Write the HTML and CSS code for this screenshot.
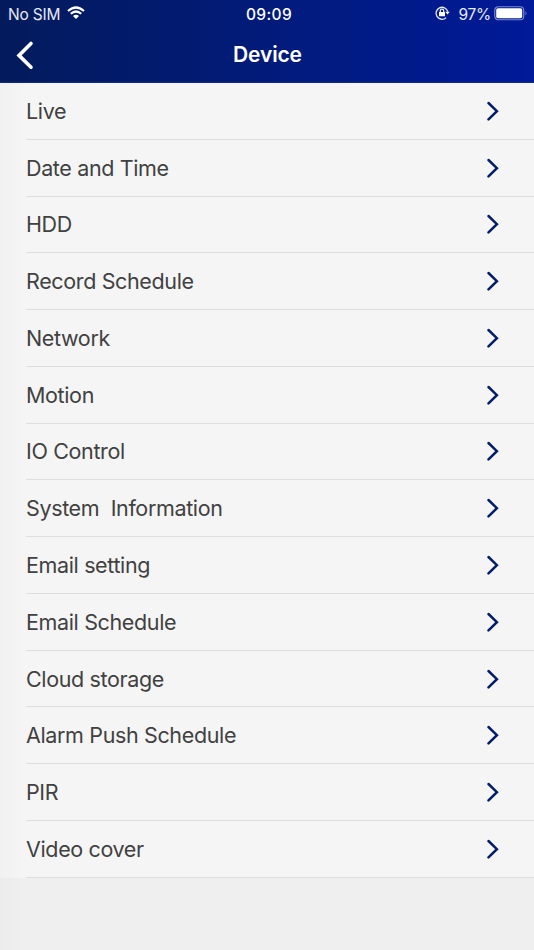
FILE: index.html
```html
<!DOCTYPE html>
<html lang="en">
<head>
<meta charset="utf-8">
<meta name="viewport" content="width=device-width">
<title>Device</title>
<link rel="stylesheet" href="styles.css">
</head>
<body>
<svg class="sprite" aria-hidden="true"><symbol id="chevron" viewBox="0 0 12 20"><path d="M1.5 2 L9.9 10.2 L1.5 18.4"/></symbol></svg>
<header class="header">
  <div class="status">
    <div class="carrier"><span>No SIM</span>
      <svg class="wifi" viewBox="0 0 18 14"><path d="M1 5 Q9 -2 17 5M3.8 7.8 Q9 3.2 14.2 7.8"/><path class="solid" d="M6 10 Q9 7.4 12 10 L9 13Z"/></svg>
    </div>
    <time class="time">09:09</time>
    <div class="power">
      <svg class="lock" viewBox="0 0 16 14"><path d="M11.2 11.6A6 6 0 1 1 12.8 5.6"/><path d="M5.3 6V4.8a1.7 1.7 0 0 1 3.4 0V6"/><path class="solid" d="M4 6h6v4.2H4zM10.3 5.8h4.4l-2.2 2.8z"/></svg>
      <span>97%</span>
      <svg class="battery" viewBox="0 0 34 15"><rect class="shell" x=".75" y=".75" width="29" height="13" rx="3.5"/><rect class="solid" x="2.2" y="2.3" width="26" height="10" rx="1.8"/><path class="cap" d="M31.5 5Q33.5 7.3 31.5 9.6Z"/></svg>
    </div>
  </div>
  <nav class="nav">
    <svg class="back" viewBox="0 0 18 28"><path d="M15 2.4 L3 14.4 L15 26.2"/></svg>
    <h1>Device</h1>
  </nav>
</header>
<main class="list">
  <div class="row"><span>Live</span><svg><use href="#chevron"/></svg></div>
  <div class="row"><span>Date and Time</span><svg><use href="#chevron"/></svg></div>
  <div class="row"><span>HDD</span><svg><use href="#chevron"/></svg></div>
  <div class="row"><span>Record Schedule</span><svg><use href="#chevron"/></svg></div>
  <div class="row"><span>Network</span><svg><use href="#chevron"/></svg></div>
  <div class="row"><span>Motion</span><svg><use href="#chevron"/></svg></div>
  <div class="row"><span>IO Control</span><svg><use href="#chevron"/></svg></div>
  <div class="row"><span>System&nbsp; Information</span><svg><use href="#chevron"/></svg></div>
  <div class="row"><span>Email setting</span><svg><use href="#chevron"/></svg></div>
  <div class="row"><span>Email Schedule</span><svg><use href="#chevron"/></svg></div>
  <div class="row"><span>Cloud storage</span><svg><use href="#chevron"/></svg></div>
  <div class="row"><span>Alarm Push Schedule</span><svg><use href="#chevron"/></svg></div>
  <div class="row"><span>PIR</span><svg><use href="#chevron"/></svg></div>
  <div class="row"><span>Video cover</span><svg><use href="#chevron"/></svg></div>
</main>
</body>
</html>
```
FILE: styles.css
```css
* { box-sizing: border-box; }
body { margin: 0; height: 950px; overflow: hidden; background: linear-gradient(90deg, #ececec, #efefef 26px); font-family: Inter, "Liberation Sans", sans-serif; }
.sprite { display: none; }
svg { display: block; flex: none; overflow: visible; }
.header { height: 83px; background: linear-gradient(90deg, #031b5b, #001a99); border-bottom: 1px solid #102b88; color: #fff; }
.status { height: 28px; padding: 2px 6px 0 8px; display: grid; grid-template-columns: 1fr auto 1fr; align-items: center; font-size: 15.5px; line-height: 26px; }
.carrier, .power { display: flex; align-items: center; }
.carrier { gap: 7px; color: #e7eaf5; letter-spacing: -.2px; }
.wifi { width: 18px; height: 14px; margin-top: -4px; fill: none; stroke: #fff; stroke-width: 2.2; }
.time { font-weight: 500; letter-spacing: .4px; margin-left: 2px; }
.power { justify-content: flex-end; color: #e7eaf5; }
.power span { margin: 0 3px 0 8px; letter-spacing: -.3px; }
.lock { width: 16px; height: 14px; margin-top: -4px; fill: none; stroke: #e7eaf5; stroke-width: 1.3; }
.solid { fill: #fff; stroke: none; }
.battery { width: 34px; height: 15px; margin: -4px 0 0; }
.shell { fill: none; stroke: #7a88cc; stroke-width: 1.2; }
.cap { fill: #7a88cc; }
.nav { height: 54px; display: grid; grid-template-columns: 1fr auto 1fr; align-items: center; padding: 0 15px 0 16px; }
.back { width: 18px; height: 28px; fill: none; stroke: #fff; stroke-width: 3.6; stroke-linecap: round; stroke-linejoin: miter; }
h1 { margin: 0; font-size: 21px; font-weight: 600; line-height: 28px; letter-spacing: -.15px; }
.list { padding-left: 26px; background: linear-gradient(90deg, #f1f1f1, #f5f5f5 26px); }
.row { height: 56.77px; display: flex; align-items: center; justify-content: space-between; padding-right: 35px; border-bottom: 1px solid #dedede; color: #414141; font-size: 21.5px; line-height: 28px; letter-spacing: -.36px; }
.row svg { width: 12px; height: 20px; fill: none; stroke: #031d68; stroke-width: 2.5; stroke-linecap: round; }
```
